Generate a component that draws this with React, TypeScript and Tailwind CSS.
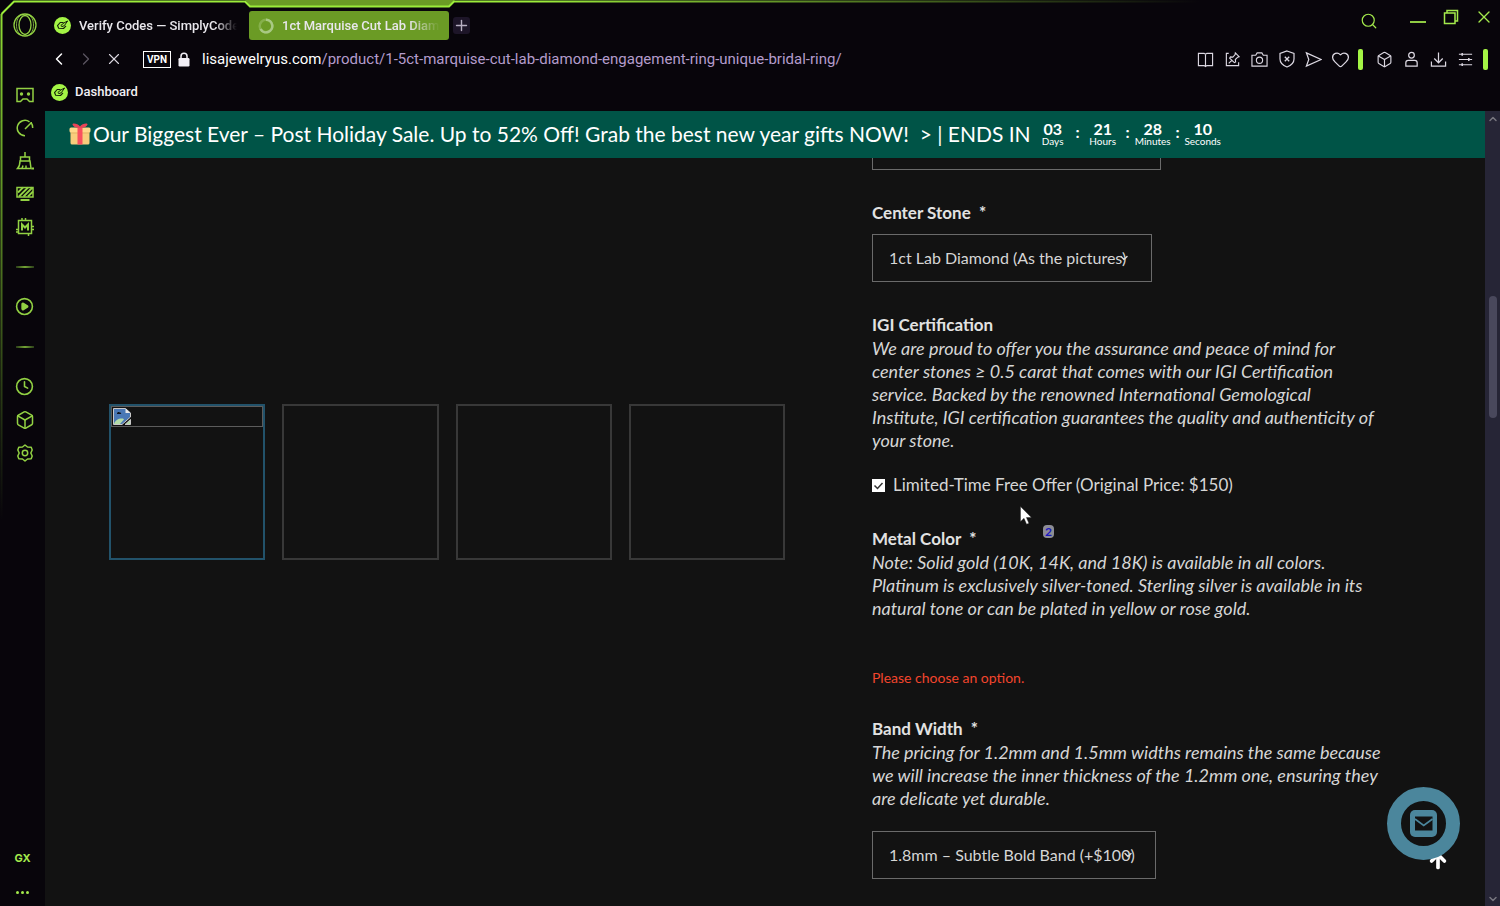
import React, { useState } from 'react';
import {
  ArrowUp,
  Box,
  ChevronDown,
  ChevronLeft,
  ChevronRight,
  ChevronUp,
  CirclePlay,
  Clock,
  Heart,
  Plus,
  Search,
  X,
} from 'lucide-react';

type IconProps = { className?: string; children?: React.ReactNode };

function Icon({ className = 'size-[18px]', children }: IconProps) {
  return (
    <svg viewBox="0 0 18 18" fill="none" stroke="currentColor" strokeWidth="1.5" className={className} aria-hidden="true">
      {children}
    </svg>
  );
}

function Favicon() {
  return (
    <svg viewBox="0 0 17 17" className="size-[17px] shrink-0" aria-hidden="true">
      <circle cx="8.5" cy="8.5" r="8.5" fill="#a4f545" />
      <path
        d="M9.500 5.500H6.200L3.500 8.600l1.200 2.600 4.800.3 2.500-2.600"
        fill="none"
        stroke="#14200a"
        strokeWidth="1.100"
        strokeLinejoin="round"
      />
      <path d="M6.800 8.500l1.200 1.100 2.300-.9 3.300-4.700-3.600 1.900Z" fill="none" stroke="#14200a" strokeWidth="1" strokeLinejoin="round" />
    </svg>
  );
}

function Gift() {
  return (
    <svg viewBox="0 0 22 22" className="size-[22px] shrink-0" aria-hidden="true">
      <rect x="1.500" y="8" width="19" height="13.500" rx="1.500" fill="#f9cd7c" />
      <rect x=".5" y="4.500" width="21" height="5" rx="1.500" fill="#ffd88a" />
      <rect x="2" y="9.500" width="18" height="1" fill="#e3b467" />
      <rect x="8.500" y="4.500" width="5" height="17" fill="#f9505f" />
      <path d="M11 5C8 5 4 4 3.500 1.500 3.500-.5 9.500 1 11 3.500 12.500 1 18.500-.5 18.500 1.500 18 4 14 5 11 5Z" fill="#e94557" />
    </svg>
  );
}

const sideTop = [
  {
    name: 'GX Corner',
    icon: (
      <Icon>
        <path d="M1 2.500h16v13h-3.500L11 13H7l-2.500 2.500H1Z" />
        <circle cx="5.500" cy="8" r="1.700" fill="currentColor" stroke="none" />
        <circle cx="12.500" cy="8" r="1.700" fill="currentColor" stroke="none" />
      </Icon>
    ),
  },
  {
    name: 'GX Control',
    icon: (
      <Icon>
        <path d="M9 16.700A7.700 7.700 0 1 1 13.500 2.800" />
        <path d="M9 10l6.500-6.500M15 3.500a8 8 0 0 1 1.700 5.500" />
      </Icon>
    ),
  },
  {
    name: 'GX Cleaner',
    icon: (
      <Icon>
        <path d="M9 0v5M4.500 9V5h9v4M4 9h10l1 7.500H1.500C3.500 14.500 4 12 4 9Z" />
        <path d="M6 16.500l1-3M10 16.500v-3" />
        <path d="M15.500 16.500h2.500" strokeWidth="2" />
      </Icon>
    ),
  },
  {
    name: 'Backgrounds',
    icon: (
      <Icon>
        <path d="M1 2.500h16v9.500H1Z" />
        <path d="M2 7.500l5-5M3 11.500l9-9M7.500 11.500l9-9M12 11.500l5-5" strokeWidth="1.800" />
        <path d="M4.500 15h9" strokeWidth="2" />
      </Icon>
    ),
  },
  {
    name: 'Mods',
    icon: (
      <Icon>
        <path d="M2.500 2.500h13v13h-13Z" />
        <path d="M6 2.500V0M9.500 2.500V0M15.500 8.500H18M15.500 11.500H18M2.500 11.500H0M2.500 14H0M12.500 15.500V18" />
        <path d="M6 12.500V6.500l3 3 3-3v6" strokeWidth="2" />
      </Icon>
    ),
  },
];

const sideBottom = [
  { name: 'History', icon: <Clock className="size-[19px]" strokeWidth={2} /> },
  { name: 'Extensions', icon: <Box className="size-[20px]" strokeWidth={1.8} /> },
  {
    name: 'Settings',
    icon: (
      <Icon>
        <path d="M9 1l2.500 2 3.700.3 1 2.700-1.400 3 1.400 3-1 2.700-3.700.3L9 17l-2.500-2-3.700-.3-1-2.700 1.400-3-1.400-3 1-2.700L6.500 3Z" strokeLinejoin="round" />
        <circle cx="9" cy="9" r="2.700" />
      </Icon>
    ),
  },
];

const sideButton = 'flex h-[33px] w-full items-center justify-center';

function SideDivider() {
  return (
    <div className="flex h-[47px] w-full items-center justify-center">
      <div className="h-[2px] w-[18px] bg-linear-to-r from-[#2c3f18] via-[#74a535] to-[#2c3f18]" />
    </div>
  );
}

function Sidebar() {
  return (
    <aside className="flex w-[45px] shrink-0 flex-col items-center pl-1 text-[#92d143]">
      <button aria-label="Opera menu" className="flex h-[50px] w-full items-center justify-center">
        <svg viewBox="0 0 24 24" fill="none" stroke="currentColor" strokeWidth="1.300" className="size-6">
          <circle cx="12" cy="12" r="11" />
          <ellipse cx="12" cy="12" rx="6" ry="9.500" />
          <path d="M10 1.200C5 3 3.500 7.500 3.500 12s1.500 9 6.500 10.800M14 1.200c5 1.800 6.500 6.300 6.500 10.800S19 21 14 22.800" strokeWidth=".8" />
        </svg>
      </button>
      <nav className="mt-7 flex w-full flex-1 flex-col items-center" aria-label="Sidebar">
        {sideTop.map((item) => (
          <button key={item.name} aria-label={item.name} className={sideButton}>
            {item.icon}
          </button>
        ))}
        <SideDivider />
        <button aria-label="Player" className={sideButton}>
          <CirclePlay className="size-[19px] [&_path]:fill-current" strokeWidth={2} />
        </button>
        <SideDivider />
        {sideBottom.map((item) => (
          <button key={item.name} aria-label={item.name} className={sideButton}>
            {item.icon}
          </button>
        ))}
        <button className="mt-auto flex h-10 w-full items-center justify-center pr-1 font-['Inter',sans-serif] text-[11px] font-bold text-[#a4ea4c]">
          GX
        </button>
        <button aria-label="More" className="flex h-7 w-full items-center justify-center gap-[2px] pr-1 text-[#a4ea4c]">
          <span className="size-[3px] rounded-full bg-current" />
          <span className="size-[3px] rounded-full bg-current" />
          <span className="size-[3px] rounded-full bg-current" />
        </button>
      </nav>
    </aside>
  );
}

function TabBar() {
  const windowButton = 'flex h-[34px] w-[33px] items-center justify-center';
  return (
    <div className="flex h-[42px] items-start text-[13px] font-medium text-[#e9e7ec]">
      <div className="flex min-w-0 items-center pt-[11px]" role="tablist">
        <button role="tab" aria-selected="false" className="flex h-[29px] w-[200px] items-center gap-2 pl-[9px]">
          <Favicon />
          <span className="w-[158px] overflow-hidden text-left whitespace-nowrap [mask-image:linear-gradient(to_right,#000_86%,transparent)]">
            Verify Codes — SimplyCodes
          </span>
        </button>
        <button
          role="tab"
          aria-selected="true"
          className="ml-1 flex h-[29px] w-[200px] items-center gap-2 rounded-[3px] bg-[#6b9b25] pl-[9px]"
        >
          <svg viewBox="0 0 16 16" fill="none" strokeWidth="2.500" className="size-4 shrink-0">
            <circle cx="8" cy="8" r="6.300" stroke="#86b04c" />
            <path d="M8 1.700A6.300 6.300 0 1 1 2.500 11" stroke="#a9c984" />
          </svg>
          <span className="w-[158px] overflow-hidden text-left whitespace-nowrap [mask-image:linear-gradient(to_right,#000_80%,transparent)]">
            1ct Marquise Cut Lab Diamond
          </span>
        </button>
        <button aria-label="New tab" className="ml-1 flex size-[17px] items-center justify-center rounded-[3px] bg-[#1d1528] text-[#b8afc2]">
          <Plus className="size-[17px]" strokeWidth={2} />
        </button>
      </div>
      <div className="ml-auto flex items-start text-[#a4ea4c]">
        <button aria-label="Search tabs" className="mr-4 flex h-[42px] w-[33px] items-center justify-center">
          <Search className="size-[18px]" strokeWidth={1.6} />
        </button>
        <button aria-label="Minimize" className="flex h-11 w-[33px] items-center justify-center">
          <span className="h-[2px] w-4 bg-[#8fcb43]" />
        </button>
        <button aria-label="Restore" className={windowButton}>
          <svg viewBox="0 0 16 16" fill="none" stroke="currentColor" strokeWidth="1.500" className="size-4">
            <path d="M1.500 4h10.500v10.500H1.500Z" />
            <path d="M4 4V1.500h10.500V12H12" />
          </svg>
        </button>
        <button aria-label="Close" className={windowButton}>
          <X className="size-5" strokeWidth={1.6} />
        </button>
      </div>
    </div>
  );
}

const toolsLeft = [
  {
    name: 'Reader',
    icon: (
      <Icon className="size-[17px]">
        <path d="M1.500 2.500h6l1.500 1 1.500-1h6v13h-6l-1.500 1-1.500-1h-6ZM9 3.500v13" strokeWidth="1.200" />
      </Icon>
    ),
  },
  {
    name: 'Pinboards',
    icon: (
      <Icon className="size-[17px]">
        <path d="M5 2.500H2.500v13h13V12" strokeWidth="1.200" />
        <path d="M12 2l4 4-1.500.5-2.500 2.500.3 2.500-1.300.8L6 7.500l.8-1.200 2.500.2 2.500-2.700ZM8.500 9.700L5 13.200" strokeWidth="1.200" />
      </Icon>
    ),
  },
  {
    name: 'Snapshot',
    icon: (
      <Icon className="size-[17px]">
        <path d="M1 4.500h4l1.500-2.500h5L13 4.500h4v11.500H1Z" strokeWidth="1.200" />
        <circle cx="9" cy="9.800" r="3.300" strokeWidth="1.200" />
      </Icon>
    ),
  },
  {
    name: 'Ad blocker',
    icon: (
      <Icon className="size-[18px]">
        <path d="M9 1l7 2.500v5.500c0 4-3 6.500-7 8-4-1.500-7-4-7-8V3.500Z" strokeWidth="1.200" />
        <path d="M6.800 6.800l4.400 4.400M11.200 6.800l-4.400 4.400" strokeWidth="1.300" />
      </Icon>
    ),
  },
  {
    name: 'My Flow',
    icon: (
      <Icon className="size-[17px]">
        <path d="M1.500 2L17 9 1.500 16 4 9Z" strokeWidth="1.300" />
      </Icon>
    ),
  },
  { name: 'Bookmark', icon: <Heart className="size-[19px]" strokeWidth={1.6} /> },
];

const toolsRight = [
  { name: 'Extensions', icon: <Box className="size-[17px]" strokeWidth={1.6} /> },
  {
    name: 'Profile',
    icon: (
      <Icon className="size-[17px]">
        <circle cx="9" cy="4.500" r="3" strokeWidth="1.300" />
        <path d="M3 16v-3.500C3 11 4 10 5.500 10h7c1.500 0 2.500 1 2.500 2.500V16Z" strokeWidth="1.300" />
      </Icon>
    ),
  },
  {
    name: 'Downloads',
    icon: (
      <Icon className="size-[17px]">
        <path d="M9 1.500V12M4.500 8L9 12.500 13.500 8M1.500 11v5h15v-5" strokeWidth="1.300" />
      </Icon>
    ),
  },
  {
    name: 'Easy setup',
    icon: (
      <Icon className="size-[17px]">
        <path d="M2 3.500h14M2 9h14M2 14.500h14" strokeWidth="1.200" />
        <path d="M5.500 2v3M12.500 7.500v3M5.500 13v3" strokeWidth="1.600" />
      </Icon>
    ),
  },
];

function AddressBar() {
  const tool = 'flex h-[34px] w-[27px] items-center justify-center';
  const marker = 'h-[21px] w-[5px] rounded-[2px] bg-[#a4f545]';
  return (
    <div className="flex h-[34px] items-center text-[#dcd8e2]">
      <button aria-label="Back" className="flex w-[27px] items-center justify-center text-white">
        <ChevronLeft className="size-5" strokeWidth={1.8} />
      </button>
      <button aria-label="Forward" className="flex w-7 items-center justify-center text-[#5b5661]">
        <ChevronRight className="size-5" strokeWidth={1.5} />
      </button>
      <button aria-label="Stop" className="flex w-7 items-center justify-center">
        <X className="size-[18px]" strokeWidth={1.5} />
      </button>
      <button className="ml-[15px] flex h-[17px] w-7 items-center justify-center border border-white text-[10px] font-bold text-white">VPN</button>
      <svg viewBox="0 0 12 15" className="ml-[7px] h-[15px] w-3 shrink-0" aria-hidden="true">
        <path d="M3 7V4.200a3 3 0 0 1 6 0V7" fill="none" stroke="#f2eff6" strokeWidth="1.500" />
        <rect x=".5" y="6" width="11" height="8.500" rx="1.200" fill="#f2eff6" />
      </svg>
      <a href="#" className="ml-3 truncate text-[15px] text-[#b49ccb]">
        <span className="text-white">lisajewelryus.com</span>/product/1-5ct-marquise-cut-lab-diamond-engagement-ring-unique-bridal-ring/
      </a>
      <div className="ml-auto flex shrink-0 items-center pr-3">
        {toolsLeft.map((item) => (
          <button key={item.name} aria-label={item.name} className={tool}>
            {item.icon}
          </button>
        ))}
        <span className={`ml-1 mr-2 ${marker}`} />
        {toolsRight.map((item) => (
          <button key={item.name} aria-label={item.name} className={tool}>
            {item.icon}
          </button>
        ))}
        <span className={`ml-1 ${marker}`} />
      </div>
    </div>
  );
}

// Neon outline along the top and left edges of the window
function WindowFrame() {
  return (
    <svg className="pointer-events-none absolute top-0 left-0 h-[520px] w-[1200px]" viewBox="0 0 1200 520" fill="none" aria-hidden="true">
      <defs>
        <linearGradient id="edge-x" gradientUnits="userSpaceOnUse" x1="0" y1="0" x2="1200" y2="0">
          <stop offset="0" stopColor="#9bec3a" />
          <stop offset=".45" stopColor="#9bec3a" />
          <stop offset="1" stopColor="#8fdc34" stopOpacity="0" />
        </linearGradient>
        <linearGradient id="edge-y" gradientUnits="userSpaceOnUse" x1="0" y1="14" x2="0" y2="520">
          <stop offset="0" stopColor="#8fdc34" />
          <stop offset="1" stopColor="#8fdc34" stopOpacity="0" />
        </linearGradient>
      </defs>
      <path d="M245 0h210l-6 6H250Z" fill="#6b9b25" />
      <path d="M1.500 14L14 1.500H245l5 5H449l5-5H1200" stroke="url(#edge-x)" strokeWidth="2" />
      <path d="M1.500 14V520" stroke="url(#edge-y)" strokeWidth="2" />
    </svg>
  );
}

const countdown = [
  { value: '03', unit: 'Days' },
  { value: '21', unit: 'Hours' },
  { value: '28', unit: 'Minutes' },
  { value: '10', unit: 'Seconds' },
];

function SaleBanner() {
  return (
    <div className="flex h-[47px] shrink-0 items-center bg-[#005447] pb-px pl-6 text-white">
      <Gift />
      <p className="ml-[2px] text-[21px] whitespace-nowrap">
        Our Biggest Ever – Post Holiday Sale. Up to 52% Off! Grab the best new year gifts NOW! &nbsp;&gt; | ENDS IN
      </p>
      <div className="ml-[2px] flex items-center">
        {countdown.map((part, i) => (
          <React.Fragment key={part.unit}>
            {i > 0 && <span className="w-[10px] pb-1 text-center text-[16px] leading-4 font-bold">:</span>}
            <div className="flex w-10 flex-col items-center">
              <span className="text-[16px] leading-[14px] font-bold">{part.value}</span>
              <span className="text-[10px] leading-[11px]">{part.unit}</span>
            </div>
          </React.Fragment>
        ))}
      </div>
    </div>
  );
}

function Gallery() {
  const [active, setActive] = useState(0);
  return (
    <div className="grid grid-cols-4 gap-x-[17px] self-start pt-[246px]">
      {[0, 1, 2, 3].map((i) => (
        <button
          key={i}
          aria-label={`Product image ${i + 1}`}
          onClick={() => setActive(i)}
          className={`flex aspect-square flex-col border-2 ${active === i ? 'border-[#22526a]' : 'border-[#383838]'}`}
        >
          {i === 0 && (
            <div className="h-[21px] w-full border border-[#5c5c5c] p-px">
              <svg viewBox="0 0 18 17" className="h-[17px] w-[18px]" aria-hidden="true">
                <path d="M.5.500h12l5 4.500v4L9 16.500H.5Z" fill="#4a78b5" stroke="#c9c9c9" />
                <path d="M1 16c1-4 5-6 9-5.500l1 1-4 4.500Z" fill="#b4dca8" />
                <path d="M4 5.500C4 4 6 3.500 7 4.500c1.500 0 1.500 1.500.5 1.500H4Z" fill="#10131c" />
                <path d="M12.500.500V5h5Z" fill="#e8e8e8" />
                <path d="M17.500 11.500v5H12Z" fill="#b4dca8" stroke="#c9c9c9" />
              </svg>
            </div>
          )}
        </button>
      ))}
    </div>
  );
}

type SelectProps = { id: string; className: string; options: string[]; label?: string };

function OptionSelect({ id, className, options, label }: SelectProps) {
  return (
    <div className={`relative h-12 ${className}`}>
      <select
        id={id}
        aria-label={label}
        className="h-full w-full appearance-none border border-[#6a6a6a] bg-transparent px-4 text-[16px] text-[#d6d6d6]"
      >
        {options.map((o) => (
          <option key={o}>{o}</option>
        ))}
      </select>
      <ChevronDown className="pointer-events-none absolute top-1/2 right-[22px] size-3 -translate-y-1/2 text-[#d6d6d6]" strokeWidth={3} />
    </div>
  );
}

const label = 'block h-6 text-[17px] leading-6 font-bold text-[#e2e2e2]';
const note = 'text-[18px] leading-[23px] whitespace-nowrap italic';

function ProductOptions() {
  const [certified, setCertified] = useState(true);
  return (
    <form className="flex flex-col items-start text-[#d6d6d6]">
      <OptionSelect id="ring-size" label="Ring size" className="-mt-9 w-[289px]" options={['']} />

      <label htmlFor="center-stone" className={`mt-[31px] ${label}`}>
        Center Stone&nbsp; *
      </label>
      <OptionSelect id="center-stone" className="mt-[9px] w-[280px]" options={['1ct Lab Diamond (As the pictures)']} />

      <h3 className={`mt-[31px] ${label}`}>IGI Certification</h3>
      <p className={note}>
        We are proud to offer you the assurance and peace of mind for
        <br />
        center stones ≥ 0.5 carat that comes with our IGI Certification
        <br />
        service. Backed by the renowned International Gemological
        <br />
        Institute, IGI certification guarantees the quality and authenticity of
        <br />
        your stone.
      </p>
      <label className="mt-[21px] flex h-6 items-center gap-2 text-[17px] leading-6 whitespace-nowrap">
        <span className="relative size-[13px]">
          <input
            type="checkbox"
            checked={certified}
            onChange={(e) => setCertified(e.target.checked)}
            className="block size-[13px] appearance-none bg-white"
          />
          {certified && (
            <svg viewBox="0 0 13 13" className="pointer-events-none absolute inset-0 size-[13px]" aria-hidden="true">
              <path d="M2.500 6.500l3 3 5-5.500" fill="none" stroke="#333" strokeWidth="1.500" />
            </svg>
          )}
        </span>
        Limited-Time Free Offer (Original Price: $150)
      </label>

      <h3 className={`mt-[30px] ${label}`}>Metal Color&nbsp; *</h3>
      <p className={note}>
        Note: Solid gold (10K, 14K, and 18K) is available in all colors.
        <br />
        Platinum is exclusively silver-toned. Sterling silver is available in its
        <br />
        natural tone or can be plated in yellow or rose gold.
      </p>
      <p role="alert" className="mt-12 text-[14px] leading-5 text-[#f2452d]">
        Please choose an option.
      </p>

      <label htmlFor="band-width" className={`mt-[29px] ${label}`}>
        Band Width&nbsp; *
      </label>
      <p className={note}>
        The pricing for 1.2mm and 1.5mm widths remains the same because
        <br />
        we will increase the inner thickness of the 1.2mm one, ensuring they
        <br />
        are delicate yet durable.
      </p>
      <OptionSelect id="band-width" className="mt-[21px] w-[284px]" options={['1.8mm – Subtle Bold Band (+$100)']} />
    </form>
  );
}

function Scrollbar() {
  return (
    <div className="flex w-[15px] shrink-0 flex-col items-center bg-[#262536] text-[#77767f]">
      <ChevronUp className="mt-[2px] size-3" strokeWidth={3} />
      <div className="mt-[171px] h-[122px] w-2 rounded-full bg-[#49485c]" />
      <ChevronDown className="mt-auto mb-px size-3" strokeWidth={3} />
    </div>
  );
}

function FloatingWidgets() {
  return (
    <>
      <button aria-label="Back to top" className="absolute right-9 bottom-[34px] text-white">
        <ArrowUp className="size-[22px]" strokeWidth={4} />
      </button>
      <button
        aria-label="Contact us"
        className="absolute right-[25px] bottom-[46px] flex size-[73px] items-center justify-center rounded-full border-[14px] border-[#4b869c] bg-[#121212]"
      >
        <svg viewBox="0 0 27 27" className="size-[27px] shrink-0">
          <rect width="27" height="27" rx="5" fill="#4b869c" />
          <rect x="5" y="6.500" width="17.500" height="14" fill="#121212" />
          <path d="M5 9l8.700 6.500L22.500 9" fill="none" stroke="#4b869c" strokeWidth="1.600" />
        </svg>
      </button>
      <svg viewBox="0 0 12 19" className="pointer-events-none absolute top-[395px] left-[975px] h-[19px] w-3" aria-hidden="true">
        <path d="M.5.500v15l3.500-3.200 2.600 5.900 2.300-1-2.500-5.700h5Z" fill="#fff" stroke="#222" strokeWidth=".4" />
      </svg>
      <span className="absolute top-[414px] left-[998px] flex h-[13px] w-[11px] items-center justify-center rounded-[4px] bg-[#8d8d96] text-[12px] leading-3 font-bold text-[#1a17c0]">
        2
      </span>
    </>
  );
}

export default function App() {
  return (
    <div className="relative flex h-screen overflow-hidden bg-[#08050b] font-['Roboto',sans-serif]">
      <Sidebar />
      <div className="flex min-w-0 flex-1 flex-col">
        <TabBar />
        <AddressBar />
        <div className="flex h-[35px] shrink-0 items-center pb-[3px] pl-[6px]">
          <a href="#" className="flex items-center gap-[7px] text-[13px] font-medium text-[#f1eff4]">
            <Favicon />
            Dashboard
          </a>
        </div>
        <div className="flex min-h-0 flex-1">
          <main className="relative flex min-w-0 flex-1 flex-col overflow-hidden bg-[#121212] font-['Lato',sans-serif]">
            <SaleBanner />
            <div className="grid min-h-0 flex-1 grid-cols-[676fr_549fr] gap-x-[87px] overflow-hidden px-16">
              <Gallery />
              <ProductOptions />
            </div>
            <FloatingWidgets />
          </main>
          <Scrollbar />
        </div>
      </div>
      <WindowFrame />
    </div>
  );
}
